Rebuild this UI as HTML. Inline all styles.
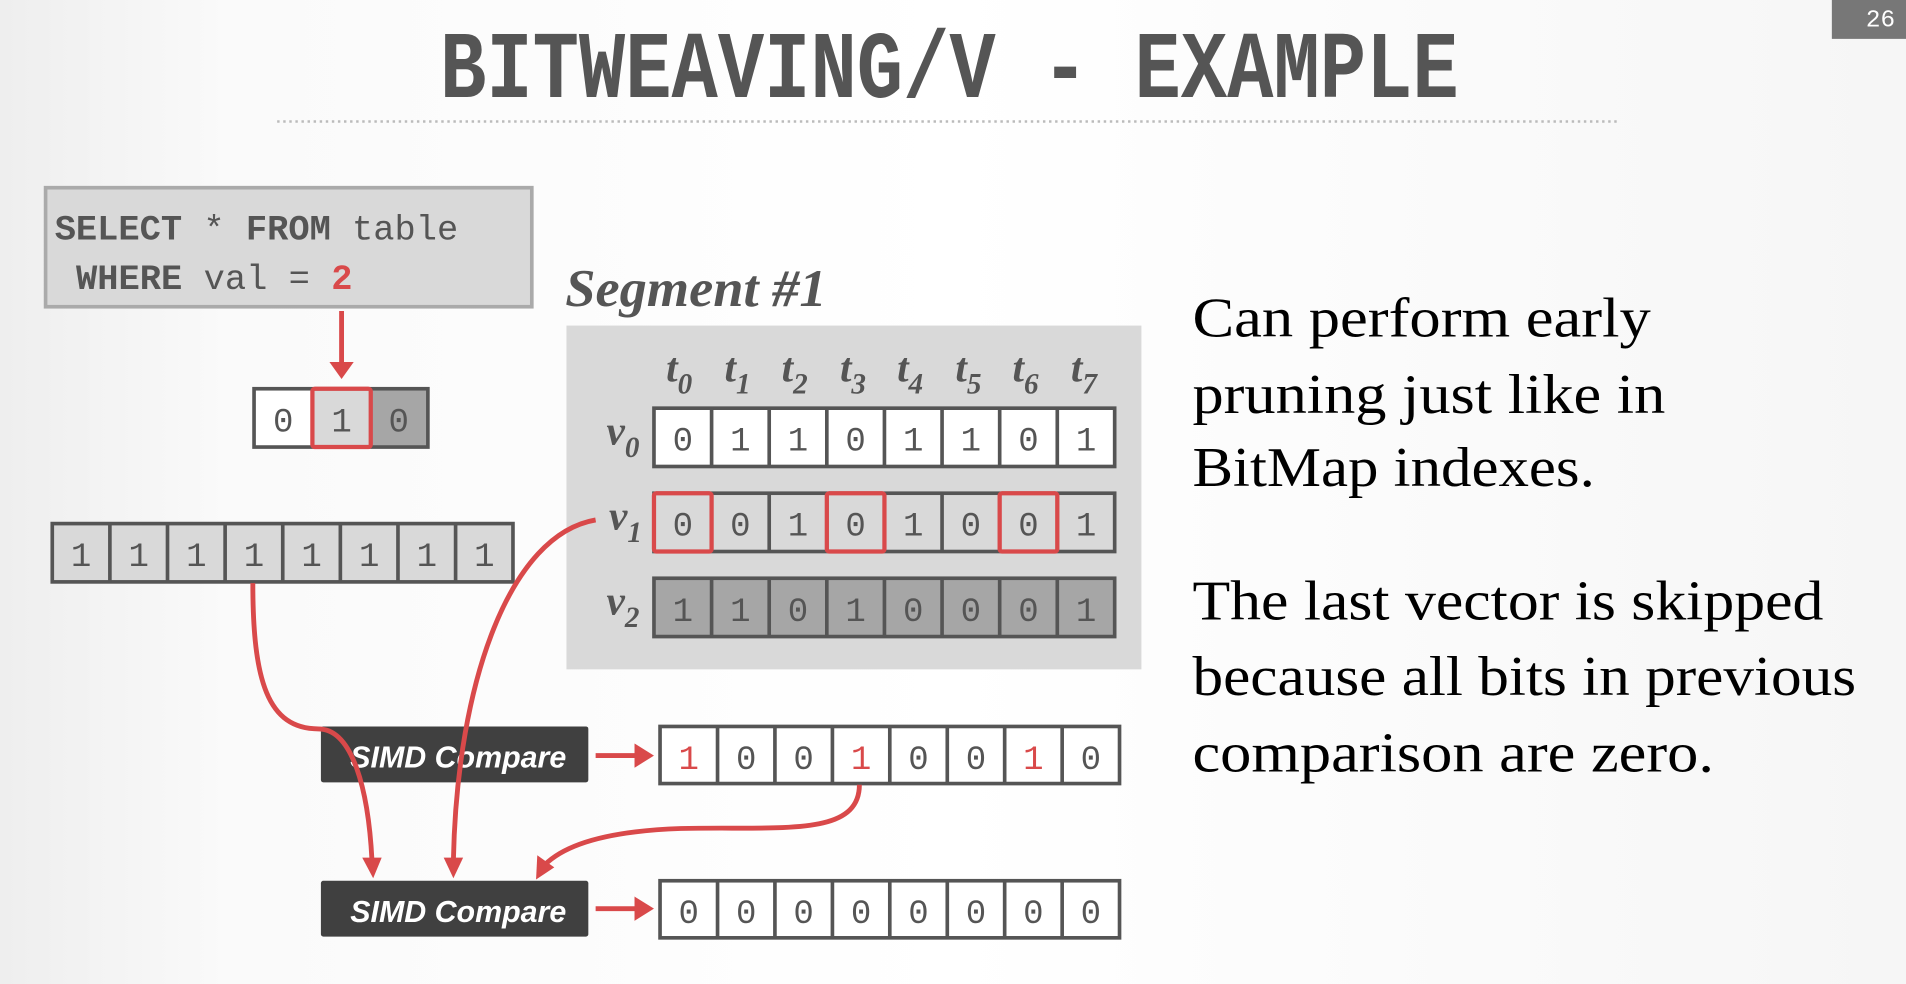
<!DOCTYPE html>
<html><head><meta charset="utf-8"><style>
html,body{margin:0;padding:0;width:1906px;height:984px;overflow:hidden;background:#fff}
svg{display:block}
.m{font-family:"Liberation Mono",monospace;font-size:28px;fill:#555;text-anchor:middle}
.s{font-family:"Liberation Serif",serif;font-size:46px;fill:#000}
.it{font-family:"Liberation Serif",serif;font-style:italic;font-weight:bold;fill:#555}
</style></head><body>
<svg width="1906" height="984" viewBox="0 0 1568 810" preserveAspectRatio="none">
<defs>
<linearGradient id="bg" x1="0" y1="0" x2="1" y2="0">
<stop offset="0" stop-color="#eeeeee"/><stop offset="0.12" stop-color="#fafafa"/><stop offset="0.5" stop-color="#fff"/><stop offset="1" stop-color="#f6f6f6"/></linearGradient>
</defs>
<rect width="1568" height="810" fill="url(#bg)"/>
<rect x="1507" y="0" width="61" height="32" fill="#777"/>
<text x="1547" y="22" font-family="Liberation Mono,monospace" font-size="20" fill="#fff" text-anchor="middle">26</text>
<text x="781" y="80" font-family="Liberation Mono,monospace" font-weight="bold" font-size="63" fill="#555" text-anchor="middle" textLength="838" lengthAdjust="spacingAndGlyphs" transform="translate(0,-20) scale(1,1.25)">BITWEAVING/V - EXAMPLE</text>
<line x1="228" y1="100" x2="1330" y2="100" stroke="#bbb" stroke-width="2" stroke-dasharray="2,3"/>

<!-- SQL -->
<rect x="37.5" y="154.5" width="400" height="98" fill="#d9d9d9" stroke="#aaa" stroke-width="3"/>
<text x="45" y="197" font-family="Liberation Mono,monospace" font-size="29" fill="#555" textLength="332" lengthAdjust="spacingAndGlyphs"><tspan font-weight="bold">SELECT</tspan> * <tspan font-weight="bold">FROM</tspan> table</text>
<text x="45" y="238" font-family="Liberation Mono,monospace" font-size="29" fill="#555" xml:space="preserve" textLength="245" lengthAdjust="spacingAndGlyphs"> <tspan font-weight="bold">WHERE</tspan> val = <tspan font-weight="bold" fill="#d9494a">2</tspan></text>
<line x1="281" y1="256" x2="281" y2="300" stroke="#d9494a" stroke-width="4"/>
<path d="M271,298 L291,298 L281,312 z" fill="#d9494a"/>

<!-- 3 cells -->
<rect x="209" y="320" width="48" height="48" fill="#fff"/>
<rect x="257" y="320" width="48" height="48" fill="#d9d9d9"/>
<rect x="305" y="320" width="47" height="48" fill="#a6a6a6"/>
<rect x="209" y="320" width="143" height="48" fill="none" stroke="#555" stroke-width="3"/>
<rect x="257" y="320" width="48" height="48" fill="none" stroke="#d9494a" stroke-width="3.5" rx="2"/>
<text class="m" x="233" y="355">0</text><text class="m" x="281" y="355">1</text><text class="m" x="328" y="355">0</text>

<!-- ones row -->
<g>
<rect x="43" y="431" width="379" height="48" fill="#d9d9d9" stroke="#555" stroke-width="3"/>
<path d="M90.4,431V479M137.8,431V479M185.2,431V479M232.6,431V479M280,431V479M327.4,431V479M374.8,431V479" stroke="#555" stroke-width="3"/>
<text class="m" y="466"><tspan x="66.7">1</tspan><tspan x="114.1">1</tspan><tspan x="161.5">1</tspan><tspan x="208.9">1</tspan><tspan x="256.3">1</tspan><tspan x="303.7">1</tspan><tspan x="351.1">1</tspan><tspan x="398.5">1</tspan></text>
</g>

<!-- Segment -->
<text class="it" x="465" y="252" font-size="44" textLength="215" lengthAdjust="spacingAndGlyphs">Segment #1</text>
<rect x="466" y="268" width="473" height="283" fill="#d9d9d9"/>
<g class="it" font-size="34">
<text x="548" y="314">t<tspan font-size="24" dy="10">0</tspan></text>
<text x="596" y="314">t<tspan font-size="24" dy="10">1</tspan></text>
<text x="643" y="314">t<tspan font-size="24" dy="10">2</tspan></text>
<text x="691" y="314">t<tspan font-size="24" dy="10">3</tspan></text>
<text x="738" y="314">t<tspan font-size="24" dy="10">4</tspan></text>
<text x="786" y="314">t<tspan font-size="24" dy="10">5</tspan></text>
<text x="833" y="314">t<tspan font-size="24" dy="10">6</tspan></text>
<text x="881" y="314">t<tspan font-size="24" dy="10">7</tspan></text>
<text x="499" y="366">v<tspan font-size="24" dy="10">0</tspan></text>
<text x="501" y="436">v<tspan font-size="24" dy="10">1</tspan></text>
<text x="499" y="506">v<tspan font-size="24" dy="10">2</tspan></text>
</g>
<g stroke="#555" stroke-width="3">
<rect x="538" y="336" width="379" height="48" fill="#fff"/>
<rect x="538" y="406" width="379" height="48" fill="#d9d9d9"/>
<rect x="538" y="476" width="379" height="48" fill="#a6a6a6"/>
<path d="M585.4,336V384M632.8,336V384M680.2,336V384M727.6,336V384M775,336V384M822.4,336V384M869.8,336V384
M585.4,406V454M632.8,406V454M680.2,406V454M727.6,406V454M775,406V454M822.4,406V454M869.8,406V454
M585.4,476V524M632.8,476V524M680.2,476V524M727.6,476V524M775,476V524M822.4,476V524M869.8,476V524"/>
</g>
<text class="m" y="371"><tspan x="561.7">0</tspan><tspan x="609.1">1</tspan><tspan x="656.5">1</tspan><tspan x="703.9">0</tspan><tspan x="751.3">1</tspan><tspan x="798.7">1</tspan><tspan x="846.1">0</tspan><tspan x="893.5">1</tspan></text>
<text class="m" y="441"><tspan x="561.7">0</tspan><tspan x="609.1">0</tspan><tspan x="656.5">1</tspan><tspan x="703.9">0</tspan><tspan x="751.3">1</tspan><tspan x="798.7">0</tspan><tspan x="846.1">0</tspan><tspan x="893.5">1</tspan></text>
<text class="m" y="511"><tspan x="561.7">1</tspan><tspan x="609.1">1</tspan><tspan x="656.5">0</tspan><tspan x="703.9">1</tspan><tspan x="751.3">0</tspan><tspan x="798.7">0</tspan><tspan x="846.1">0</tspan><tspan x="893.5">1</tspan></text>
<g fill="none" stroke="#d9494a" stroke-width="3.5">
<rect x="538" y="406" width="47.4" height="48" rx="2"/>
<rect x="680.2" y="406" width="47.4" height="48" rx="2"/>
<rect x="822.4" y="406" width="47.4" height="48" rx="2"/>
</g>

<!-- SIMD boxes -->
<rect x="264" y="598" width="220" height="46" rx="2" fill="#404040"/>
<rect x="264" y="725" width="220" height="46" rx="2" fill="#404040"/>
<text x="377" y="632" font-family="Liberation Sans,sans-serif" font-style="italic" font-weight="bold" font-size="25" fill="#fff" text-anchor="middle">SIMD Compare</text>
<text x="377" y="759" font-family="Liberation Sans,sans-serif" font-style="italic" font-weight="bold" font-size="25" fill="#fff" text-anchor="middle">SIMD Compare</text>
<line x1="490" y1="622" x2="524" y2="622" stroke="#d9494a" stroke-width="4"/>
<path d="M522,612 L538,622 L522,632 z" fill="#d9494a"/>
<line x1="490" y1="748" x2="524" y2="748" stroke="#d9494a" stroke-width="4"/>
<path d="M522,738 L538,748 L522,758 z" fill="#d9494a"/>

<!-- result rows -->
<g stroke="#555" stroke-width="3" fill="#fff">
<rect x="543" y="598" width="378" height="47"/>
<rect x="543" y="725" width="378" height="47"/>
<path d="M590.3,598V645M637.5,598V645M684.8,598V645M732,598V645M779.3,598V645M826.5,598V645M873.8,598V645
M590.3,725V772M637.5,725V772M684.8,725V772M732,725V772M779.3,725V772M826.5,725V772M873.8,725V772"/>
</g>
<text class="m" y="633"><tspan x="566.6" fill="#d9494a">1</tspan><tspan x="613.9">0</tspan><tspan x="661.1">0</tspan><tspan x="708.4" fill="#d9494a">1</tspan><tspan x="755.6">0</tspan><tspan x="802.9">0</tspan><tspan x="850.1" fill="#d9494a">1</tspan><tspan x="897.4">0</tspan></text>
<text class="m" y="760"><tspan x="566.6">0</tspan><tspan x="613.9">0</tspan><tspan x="661.1">0</tspan><tspan x="708.4">0</tspan><tspan x="755.6">0</tspan><tspan x="802.9">0</tspan><tspan x="850.1">0</tspan><tspan x="897.4">0</tspan></text>

<!-- curves -->
<g fill="none" stroke="#d9494a" stroke-width="4">
<path d="M208,480 C208,560 220,600 262,600 C290,600 303,650 306,708"/>
<path d="M490,428 C420,440 376,560 373,708"/>
<path d="M707,646 C707,690 640,680 560,682 C500,684 465,695 448,712"/>
</g>
<path d="M298,706 L314,706 L307,723 z" fill="#d9494a"/>
<path d="M365,706 L381,706 L373,723 z" fill="#d9494a"/>
<path d="M442,704 L456,714 L441,724 z" fill="#d9494a"/>

<!-- right text -->
<text class="s" x="981" y="277" textLength="377" lengthAdjust="spacingAndGlyphs">Can perform early</text>
<text class="s" x="981" y="340" textLength="389" lengthAdjust="spacingAndGlyphs">pruning just like in</text>
<text class="s" x="981" y="400" textLength="331" lengthAdjust="spacingAndGlyphs">BitMap indexes.</text>
<text class="s" x="981" y="510" textLength="519" lengthAdjust="spacingAndGlyphs">The last vector is skipped</text>
<text class="s" x="981" y="572" textLength="546" lengthAdjust="spacingAndGlyphs">because all bits in previous</text>
<text class="s" x="981" y="635" textLength="429" lengthAdjust="spacingAndGlyphs">comparison are zero.</text>
</svg>
</body></html>
